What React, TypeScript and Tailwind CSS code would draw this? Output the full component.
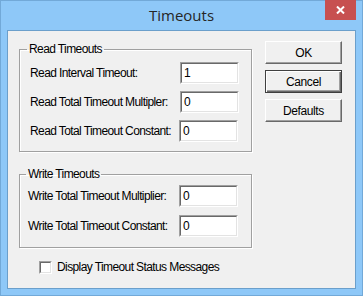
import { ReactElement } from "react";

const ui = { fontFamily: '"Liberation Sans", Arial, sans-serif' };

// sunken edit box, win classic style
const Edit = ({ value, className = "" }: { value: string; className?: string }): ReactElement => (
  <div
    className={`w-[59px] h-[22px] border border-t-[#a0a0a0] border-l-[#a0a0a0] border-b-white border-r-white ${className}`}
  >
    <div className="h-full border border-t-[#696969] border-l-[#696969] border-b-[#e3e3e3] border-r-[#e3e3e3] bg-white pl-[2px] text-[12px] leading-[18px] text-black">
      {value}
    </div>
  </div>
);

const Row = ({ label, value, editClass }: { label: string; value: string; editClass?: string }): ReactElement => (
  <div className="flex items-center justify-between">
    <span className="text-[12px] tracking-[-0.6px] text-black">{label}</span>
    <Edit value={value} className={editClass} />
  </div>
);

const Btn = ({ label, isDefault = false }: { label: string; isDefault?: boolean }): ReactElement =>
  isDefault ? (
    <button className="w-[77px] h-[23px] border border-[#404040] bg-[#f0f0f0] shadow-[inset_1px_1px_0_#fff,inset_-1px_-1px_0_#696969,inset_-2px_-2px_0_#a0a0a0] text-[12px] tracking-[-0.4px] text-black">
      {label}
    </button>
  ) : (
    <button className="w-[77px] h-[23px] border border-t-white border-l-white border-b-[#696969] border-r-[#696969] bg-[#f0f0f0] shadow-[inset_-1px_-1px_0_#a0a0a0] text-[12px] tracking-[-0.4px] text-black">
      {label}
    </button>
  );

export default function App(): ReactElement {
  return (
    <div
      className="w-[363px] h-[296px] bg-[#8ec8f8] border border-[#72a9d8] flex flex-col"
      style={ui}
    >
      {/* Title bar */}
      <div className="h-[29px] grid grid-cols-[1fr_auto_1fr]">
        <div />
        <div
          className="text-[15px] leading-[29px] text-[#262626]"
          style={{ fontFamily: '"Open Sans", "Noto Sans", sans-serif' }}
        >
          Timeouts
        </div>
        <div className="flex justify-end pr-[6px]">
          <div className="w-[31px] h-[20px] -mt-[1px] bg-[#c75050] flex items-center justify-center">
            <svg width="9" height="8" viewBox="0 0 9 8">
              <path d="M1 0.5 L8 7.5 M8 0.5 L1 7.5" stroke="#fff" strokeWidth="2" />
            </svg>
          </div>
        </div>
      </div>

      {/* Client area */}
      <div className="mx-[6px] h-[259px] border border-[#6b9fcb] bg-[#f0f0f0] flex pl-[11px]">
        <div className="w-[233px] pt-[12px] flex flex-col">
          <fieldset className="border border-[#a0a0a0] shadow-[inset_1px_1px_0_#fff,1px_1px_0_#fff] pl-[10px] pr-[12px] pt-[6px] pb-[9px]">
            <legend className="-ml-[3px] px-[2px] text-[12px] leading-[13px] tracking-[-0.6px] text-black">
              Read Timeouts
            </legend>
            <div className="flex flex-col gap-[7px]">
              <Row label="Read Interval Timeout:" value="1" />
              <Row label="Read Total Timeout Multipler:" value="0" />
              <Row label="Read Total Timeout Constant:" value="0" editClass="mr-[1px]" />
            </div>
          </fieldset>

          <fieldset className="mt-[16px] border border-[#a0a0a0] shadow-[inset_1px_1px_0_#fff,1px_1px_0_#fff] pl-[8px] pr-[13px] pt-[4px] pb-[10px]">
            <legend className="-ml-[2px] px-[2px] text-[12px] leading-[13px] tracking-[-0.6px] text-black">
              Write Timeouts
            </legend>
            <div className="flex flex-col gap-[8px]">
              <Row label="Write Total Timeout Multiplier:" value="0" />
              <Row label="Write Total Timeout Constant:" value="0" />
            </div>
          </fieldset>

          <label className="mt-[13px] ml-[20px] flex items-center gap-[5px]">
            <span className="w-[13px] h-[13px] border border-t-[#a0a0a0] border-l-[#a0a0a0] border-b-white border-r-white">
              <span className="block w-full h-full border border-t-[#696969] border-l-[#696969] border-b-[#e3e3e3] border-r-[#e3e3e3] bg-white" />
            </span>
            <span className="text-[12px] leading-[13px] tracking-[-0.6px] text-black">
              Display Timeout Status Messages
            </span>
          </label>
        </div>

        <div className="ml-[13px] pt-[10px] flex flex-col gap-[6px]">
          <Btn label="OK" />
          <Btn label="Cancel" isDefault />
          <Btn label="Defaults" />
        </div>
      </div>
    </div>
  );
}
